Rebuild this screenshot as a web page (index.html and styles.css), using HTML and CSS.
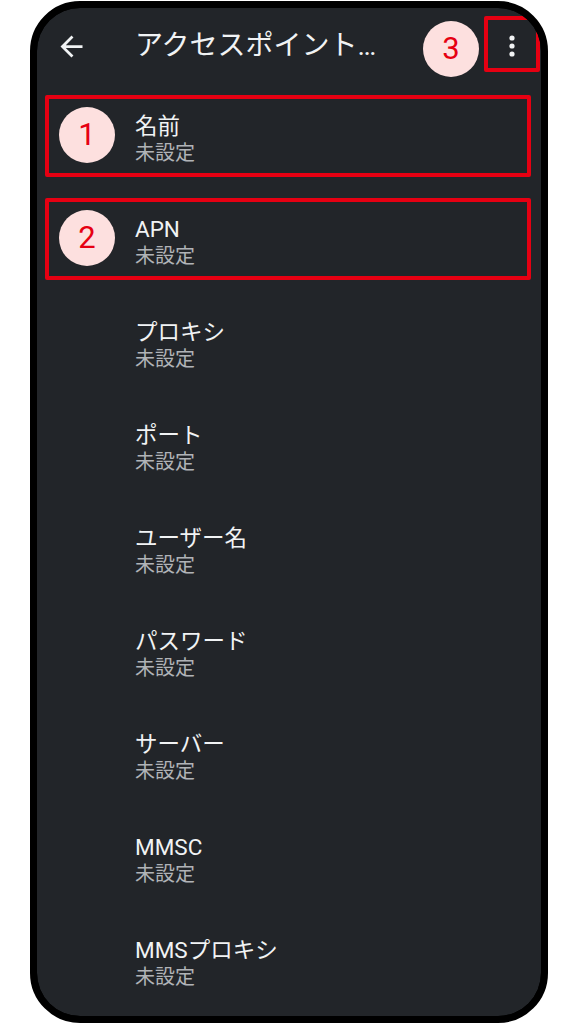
FILE: index.html
```html
<!DOCTYPE html>
<html lang="ja">
<head>
<meta charset="utf-8">
<link rel="stylesheet" href="styles.css">
</head>
<body>
<div class="phone">
  <div class="screen">
    <header class="appbar">
      <svg class="back" viewBox="0 0 24 24" width="33" height="33"><path fill="#f1f3f4" d="M20 11H7.83l5.59-5.59L12 4l-8 8 8 8 1.41-1.41L7.83 13H20v-2z"/></svg>
      <h1 class="title">アクセスポイント…</h1>
      <span class="badge badge-head">3</span>
      <div class="more">
        <svg viewBox="0 0 10 26" width="10" height="26"><circle cx="5" cy="5" r="2.6" fill="#f1f3f4"/><circle cx="5" cy="13" r="2.6" fill="#f1f3f4"/><circle cx="5" cy="21" r="2.6" fill="#f1f3f4"/></svg>
        <span class="mark mark-more"></span>
      </div>
    </header>
    <ul class="list">
      <li class="row"><span class="mark mark-row"></span><span class="badge badge-row">1</span><div class="t">名前</div><div class="s">未設定</div></li>
      <li class="row"><span class="mark mark-row"></span><span class="badge badge-row">2</span><div class="t">APN</div><div class="s">未設定</div></li>
      <li class="row"><div class="t">プロキシ</div><div class="s">未設定</div></li>
      <li class="row"><div class="t">ポート</div><div class="s">未設定</div></li>
      <li class="row"><div class="t">ユーザー名</div><div class="s">未設定</div></li>
      <li class="row"><div class="t">パスワード</div><div class="s">未設定</div></li>
      <li class="row"><div class="t">サーバー</div><div class="s">未設定</div></li>
      <li class="row"><div class="t">MMSC</div><div class="s">未設定</div></li>
      <li class="row"><div class="t">MMSプロキシ</div><div class="s">未設定</div></li>
    </ul>
  </div>
</div>
</body>
</html>
```

FILE: styles.css
```css
* { box-sizing: border-box; }
html, body { margin: 0; padding: 0; background: #ffffff; }
body { font-family: Roboto, "Noto Sans CJK JP", sans-serif; }

.phone {
  margin: 1px 0 0 30px;
  width: 518px;
  height: 1022px;
  border: 7px solid #000;
  border-radius: 50px;
  background: #000;
  overflow: hidden;
}
.screen {
  width: 100%;
  height: 100%;
  border-radius: 43px;
  background: #222529;
  overflow: hidden;
  position: relative;
}

.appbar {
  position: relative;
  display: flex;
  align-items: center;
  height: 76px;
  padding: 0 1px 0 18px;
}
.back { display: block; flex: none; }
.title {
  margin: 0 0 0 47px;
  font-size: 28px;
  font-weight: 400;
  color: #f1f3f4;
  line-height: 1;
  white-space: nowrap;
  flex: 1;
}
.more {
  position: relative;
  width: 56px;
  height: 56px;
  display: flex;
  align-items: center;
  justify-content: center;
  flex: none;
}
.more svg { display: block; }

.mark {
  position: absolute;
  border: 4px solid #e60012;
  border-radius: 2px;
}
.mark-more { left: 0; top: -2px; width: 56px; height: 56px; }

.badge {
  position: absolute;
  width: 56px;
  height: 56px;
  border-radius: 50%;
  background: #fde0df;
  color: #e60012;
  font-family: Roboto, sans-serif;
  font-size: 31px;
  line-height: 56px;
  text-align: center;
}
.badge-head { left: 386px; top: 13px; }

.list { list-style: none; margin: 0; padding: 0; }
.row {
  position: relative;
  height: 103px;
  padding: 28px 0 0 98px;
}
.mark-row { left: 8px; top: 11px; width: 486px; height: 82px; }
.badge-row { left: 22px; top: 23px; }
.t {
  font-size: 22.5px;
  line-height: 28px;
  color: #f1f3f4;
  white-space: nowrap;
}
.s {
  font-size: 20px;
  line-height: 26px;
  color: #b0b3b7;
}
```
